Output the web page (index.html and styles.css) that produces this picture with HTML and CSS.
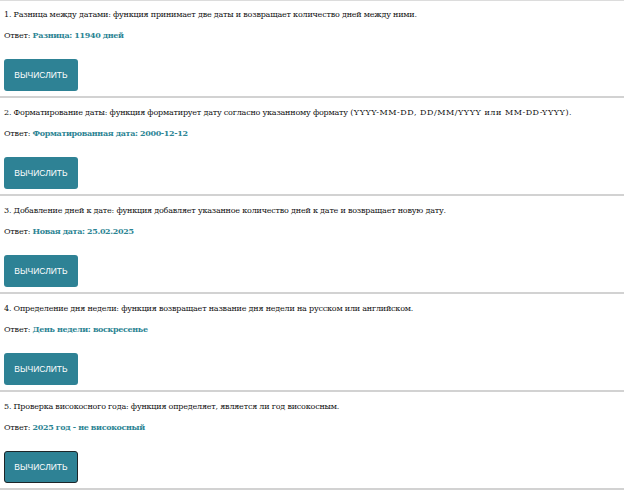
FILE: index.html
```html
<!DOCTYPE html>
<html lang="ru">
<head>
<meta charset="utf-8">
<title>Функции дат</title>
<link rel="stylesheet" href="styles.css">
</head>
<body>
<div class="top-rule"></div>
<section class="task">
  <p class="desc">1. Разница между датами: функция принимает две даты и возвращает количество дней между ними.</p>
  <p class="answer">Ответ: <span class="result">Разница: 11940 дней</span></p>
  <button class="calc">ВЫЧИСЛИТЬ</button>
</section>
<section class="task">
  <p class="desc">2. Форматирование даты: функция форматирует дату согласно указанному формату <span class="formats">(YYYY-MM-DD, DD/MM/YYYY или MM-DD-YYYY).</span></p>
  <p class="answer">Ответ: <span class="result">Форматированная дата: 2000-12-12</span></p>
  <button class="calc">ВЫЧИСЛИТЬ</button>
</section>
<section class="task">
  <p class="desc">3. Добавление дней к дате: функция добавляет указанное количество дней к дате и возвращает новую дату.</p>
  <p class="answer">Ответ: <span class="result">Новая дата: 25.02.2025</span></p>
  <button class="calc">ВЫЧИСЛИТЬ</button>
</section>
<section class="task">
  <p class="desc">4. Определение дня недели: функция возвращает название дня недели на русском или английском.</p>
  <p class="answer">Ответ: <span class="result">День недели: воскресенье</span></p>
  <button class="calc">ВЫЧИСЛИТЬ</button>
</section>
<section class="task">
  <p class="desc">5. Проверка високосного года: функция определяет, является ли год високосным.</p>
  <p class="answer">Ответ: <span class="result">2025 год - не високосный</span></p>
  <button class="calc focused">ВЫЧИСЛИТЬ</button>
</section>
</body>
</html>
```
FILE: styles.css
```css
html, body {
  margin: 0;
  padding: 0;
  background: #ffffff;
}
body {
  font-family: "DejaVu Serif", serif;
  font-size: 8px;
  letter-spacing: -0.2px;
  color: #111111;
}
.top-rule {
  height: 1px;
  background: #dcdcdc;
}
.task {
  display: flex;
  flex-direction: column;
  align-items: flex-start;
  padding: 8px 0 0 4px;
  height: 88px;
  border-bottom: 2px solid #d2d2d2;
}
.task:first-of-type {
  padding-top: 7px;
}
.desc, .answer {
  margin: 0;
  line-height: 14px;
}
.formats {
  letter-spacing: 0.55px;
}
.answer {
  margin-top: 6px;
}
.result {
  color: #2d8594;
  font-weight: bold;
  letter-spacing: -0.35px;
}
.calc {
  margin-top: 16px;
  width: 74px;
  height: 32px;
  border: none;
  border-radius: 3px;
  background: #2e8295;
  color: #ffffff;
  font-family: "Liberation Sans", Arial, sans-serif;
  font-size: 8.5px;
  letter-spacing: 0;
  padding: 0;
  cursor: pointer;
}
.calc.focused {
  border: 1.5px solid #1d2528;
}
```
